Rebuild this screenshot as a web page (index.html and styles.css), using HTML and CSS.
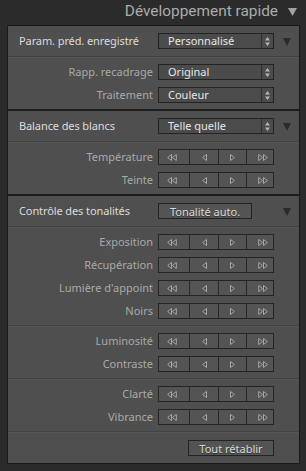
FILE: index.html
```html
<!DOCTYPE html>
<html lang="fr">
<head>
<meta charset="utf-8">
<link rel="stylesheet" href="styles.css">
</head>
<body>
<div class="app">
  <div class="title"><span>Développement rapide</span><svg class="tri" viewBox="0 0 9 8" width="9" height="8"><path d="M0 0 H9 L4.5 8 Z" fill="#a2a2a2"/></svg></div>
  <div class="panel">
    <section class="sec">
      <div class="head">
        <span class="htext">Param. préd. enregistré</span>
        <div class="select"><span>Personnalisé</span><i class="spin"><svg viewBox="0 0 5 9" width="5" height="9"><path d="M2.5 0 L5 3.5 H0 Z M2.5 9 L5 5.5 H0 Z" fill="#b4b4b4"/></svg></i></div>
        <svg class="disc" viewBox="0 0 8 8" width="8" height="8"><path d="M0 0 H8 L4 8 Z" fill="#2b2b2b"/></svg>
      </div>
      <div class="sep"></div>
      <div class="rows">
        <div class="row"><span class="lab">Rapp. recadrage</span><div class="select"><span>Original</span><i class="spin"><svg viewBox="0 0 5 9" width="5" height="9"><path d="M2.5 0 L5 3.5 H0 Z M2.5 9 L5 5.5 H0 Z" fill="#b4b4b4"/></svg></i></div></div>
        <div class="row"><span class="lab">Traitement</span><div class="select"><span>Couleur</span><i class="spin"><svg viewBox="0 0 5 9" width="5" height="9"><path d="M2.5 0 L5 3.5 H0 Z M2.5 9 L5 5.5 H0 Z" fill="#b4b4b4"/></svg></i></div></div>
      </div>
    </section>
    <section class="sec">
      <div class="head">
        <span class="htext">Balance des blancs</span>
        <div class="select"><span>Telle quelle</span><i class="spin"><svg viewBox="0 0 5 9" width="5" height="9"><path d="M2.5 0 L5 3.5 H0 Z M2.5 9 L5 5.5 H0 Z" fill="#b4b4b4"/></svg></i></div>
        <svg class="disc" viewBox="0 0 8 8" width="8" height="8"><path d="M0 0 H8 L4 8 Z" fill="#2b2b2b"/></svg>
      </div>
      <div class="sep"></div>
      <div class="rows">
        <div class="row"><span class="lab">Température</span><div class="steps"><b class="s1"><svg viewBox="0 0 10 7" width="10" height="7"><path d="M4.5 0.5 L0.7 3.5 L4.5 6.5 Z M9.3 0.5 L5.5 3.5 L9.3 6.5 Z" fill="#4c4c4c" stroke="#a8a8a8"/></svg></b><b class="s2"><svg viewBox="0 0 5 7" width="5" height="7"><path d="M4.5 0.5 L0.7 3.5 L4.5 6.5 Z" fill="#4c4c4c" stroke="#a8a8a8"/></svg></b><b class="s3"><svg viewBox="0 0 5 7" width="5" height="7"><path d="M0.5 0.5 L4.3 3.5 L0.5 6.5 Z" fill="#4c4c4c" stroke="#a8a8a8"/></svg></b><b class="s4"><svg viewBox="0 0 10 7" width="10" height="7"><path d="M0.7 0.5 L4.5 3.5 L0.7 6.5 Z M5.5 0.5 L9.3 3.5 L5.5 6.5 Z" fill="#4c4c4c" stroke="#a8a8a8"/></svg></b></div></div>
        <div class="row"><span class="lab">Teinte</span><div class="steps"><b class="s1"><svg viewBox="0 0 10 7" width="10" height="7"><path d="M4.5 0.5 L0.7 3.5 L4.5 6.5 Z M9.3 0.5 L5.5 3.5 L9.3 6.5 Z" fill="#4c4c4c" stroke="#a8a8a8"/></svg></b><b class="s2"><svg viewBox="0 0 5 7" width="5" height="7"><path d="M4.5 0.5 L0.7 3.5 L4.5 6.5 Z" fill="#4c4c4c" stroke="#a8a8a8"/></svg></b><b class="s3"><svg viewBox="0 0 5 7" width="5" height="7"><path d="M0.5 0.5 L4.3 3.5 L0.5 6.5 Z" fill="#4c4c4c" stroke="#a8a8a8"/></svg></b><b class="s4"><svg viewBox="0 0 10 7" width="10" height="7"><path d="M0.7 0.5 L4.5 3.5 L0.7 6.5 Z M5.5 0.5 L9.3 3.5 L5.5 6.5 Z" fill="#4c4c4c" stroke="#a8a8a8"/></svg></b></div></div>
      </div>
    </section>
    <section class="sec last">
      <div class="head">
        <span class="htext">Contrôle des tonalités</span>
        <div class="btn auto">Tonalité auto.</div>
        <svg class="disc far" viewBox="0 0 8 8" width="8" height="8"><path d="M0 0 H8 L4 8 Z" fill="#2b2b2b"/></svg>
      </div>
      <div class="sep"></div>
      <div class="rows">
        <div class="row"><span class="lab">Exposition</span><div class="steps"><b class="s1"><svg viewBox="0 0 10 7" width="10" height="7"><path d="M4.5 0.5 L0.7 3.5 L4.5 6.5 Z M9.3 0.5 L5.5 3.5 L9.3 6.5 Z" fill="#4c4c4c" stroke="#a8a8a8"/></svg></b><b class="s2"><svg viewBox="0 0 5 7" width="5" height="7"><path d="M4.5 0.5 L0.7 3.5 L4.5 6.5 Z" fill="#4c4c4c" stroke="#a8a8a8"/></svg></b><b class="s3"><svg viewBox="0 0 5 7" width="5" height="7"><path d="M0.5 0.5 L4.3 3.5 L0.5 6.5 Z" fill="#4c4c4c" stroke="#a8a8a8"/></svg></b><b class="s4"><svg viewBox="0 0 10 7" width="10" height="7"><path d="M0.7 0.5 L4.5 3.5 L0.7 6.5 Z M5.5 0.5 L9.3 3.5 L5.5 6.5 Z" fill="#4c4c4c" stroke="#a8a8a8"/></svg></b></div></div>
        <div class="row"><span class="lab">Récupération</span><div class="steps"><b class="s1"><svg viewBox="0 0 10 7" width="10" height="7"><path d="M4.5 0.5 L0.7 3.5 L4.5 6.5 Z M9.3 0.5 L5.5 3.5 L9.3 6.5 Z" fill="#4c4c4c" stroke="#a8a8a8"/></svg></b><b class="s2"><svg viewBox="0 0 5 7" width="5" height="7"><path d="M4.5 0.5 L0.7 3.5 L4.5 6.5 Z" fill="#4c4c4c" stroke="#a8a8a8"/></svg></b><b class="s3"><svg viewBox="0 0 5 7" width="5" height="7"><path d="M0.5 0.5 L4.3 3.5 L0.5 6.5 Z" fill="#4c4c4c" stroke="#a8a8a8"/></svg></b><b class="s4"><svg viewBox="0 0 10 7" width="10" height="7"><path d="M0.7 0.5 L4.5 3.5 L0.7 6.5 Z M5.5 0.5 L9.3 3.5 L5.5 6.5 Z" fill="#4c4c4c" stroke="#a8a8a8"/></svg></b></div></div>
        <div class="row"><span class="lab">Lumière d'appoint</span><div class="steps"><b class="s1"><svg viewBox="0 0 10 7" width="10" height="7"><path d="M4.5 0.5 L0.7 3.5 L4.5 6.5 Z M9.3 0.5 L5.5 3.5 L9.3 6.5 Z" fill="#4c4c4c" stroke="#a8a8a8"/></svg></b><b class="s2"><svg viewBox="0 0 5 7" width="5" height="7"><path d="M4.5 0.5 L0.7 3.5 L4.5 6.5 Z" fill="#4c4c4c" stroke="#a8a8a8"/></svg></b><b class="s3"><svg viewBox="0 0 5 7" width="5" height="7"><path d="M0.5 0.5 L4.3 3.5 L0.5 6.5 Z" fill="#4c4c4c" stroke="#a8a8a8"/></svg></b><b class="s4"><svg viewBox="0 0 10 7" width="10" height="7"><path d="M0.7 0.5 L4.5 3.5 L0.7 6.5 Z M5.5 0.5 L9.3 3.5 L5.5 6.5 Z" fill="#4c4c4c" stroke="#a8a8a8"/></svg></b></div></div>
        <div class="row"><span class="lab">Noirs</span><div class="steps"><b class="s1"><svg viewBox="0 0 10 7" width="10" height="7"><path d="M4.5 0.5 L0.7 3.5 L4.5 6.5 Z M9.3 0.5 L5.5 3.5 L9.3 6.5 Z" fill="#4c4c4c" stroke="#a8a8a8"/></svg></b><b class="s2"><svg viewBox="0 0 5 7" width="5" height="7"><path d="M4.5 0.5 L0.7 3.5 L4.5 6.5 Z" fill="#4c4c4c" stroke="#a8a8a8"/></svg></b><b class="s3"><svg viewBox="0 0 5 7" width="5" height="7"><path d="M0.5 0.5 L4.3 3.5 L0.5 6.5 Z" fill="#4c4c4c" stroke="#a8a8a8"/></svg></b><b class="s4"><svg viewBox="0 0 10 7" width="10" height="7"><path d="M0.7 0.5 L4.5 3.5 L0.7 6.5 Z M5.5 0.5 L9.3 3.5 L5.5 6.5 Z" fill="#4c4c4c" stroke="#a8a8a8"/></svg></b></div></div>
      </div>
      <div class="sep"></div>
      <div class="rows">
        <div class="row"><span class="lab">Luminosité</span><div class="steps"><b class="s1"><svg viewBox="0 0 10 7" width="10" height="7"><path d="M4.5 0.5 L0.7 3.5 L4.5 6.5 Z M9.3 0.5 L5.5 3.5 L9.3 6.5 Z" fill="#4c4c4c" stroke="#a8a8a8"/></svg></b><b class="s2"><svg viewBox="0 0 5 7" width="5" height="7"><path d="M4.5 0.5 L0.7 3.5 L4.5 6.5 Z" fill="#4c4c4c" stroke="#a8a8a8"/></svg></b><b class="s3"><svg viewBox="0 0 5 7" width="5" height="7"><path d="M0.5 0.5 L4.3 3.5 L0.5 6.5 Z" fill="#4c4c4c" stroke="#a8a8a8"/></svg></b><b class="s4"><svg viewBox="0 0 10 7" width="10" height="7"><path d="M0.7 0.5 L4.5 3.5 L0.7 6.5 Z M5.5 0.5 L9.3 3.5 L5.5 6.5 Z" fill="#4c4c4c" stroke="#a8a8a8"/></svg></b></div></div>
        <div class="row"><span class="lab">Contraste</span><div class="steps"><b class="s1"><svg viewBox="0 0 10 7" width="10" height="7"><path d="M4.5 0.5 L0.7 3.5 L4.5 6.5 Z M9.3 0.5 L5.5 3.5 L9.3 6.5 Z" fill="#4c4c4c" stroke="#a8a8a8"/></svg></b><b class="s2"><svg viewBox="0 0 5 7" width="5" height="7"><path d="M4.5 0.5 L0.7 3.5 L4.5 6.5 Z" fill="#4c4c4c" stroke="#a8a8a8"/></svg></b><b class="s3"><svg viewBox="0 0 5 7" width="5" height="7"><path d="M0.5 0.5 L4.3 3.5 L0.5 6.5 Z" fill="#4c4c4c" stroke="#a8a8a8"/></svg></b><b class="s4"><svg viewBox="0 0 10 7" width="10" height="7"><path d="M0.7 0.5 L4.5 3.5 L0.7 6.5 Z M5.5 0.5 L9.3 3.5 L5.5 6.5 Z" fill="#4c4c4c" stroke="#a8a8a8"/></svg></b></div></div>
      </div>
      <div class="sep"></div>
      <div class="rows">
        <div class="row"><span class="lab">Clarté</span><div class="steps"><b class="s1"><svg viewBox="0 0 10 7" width="10" height="7"><path d="M4.5 0.5 L0.7 3.5 L4.5 6.5 Z M9.3 0.5 L5.5 3.5 L9.3 6.5 Z" fill="#4c4c4c" stroke="#a8a8a8"/></svg></b><b class="s2"><svg viewBox="0 0 5 7" width="5" height="7"><path d="M4.5 0.5 L0.7 3.5 L4.5 6.5 Z" fill="#4c4c4c" stroke="#a8a8a8"/></svg></b><b class="s3"><svg viewBox="0 0 5 7" width="5" height="7"><path d="M0.5 0.5 L4.3 3.5 L0.5 6.5 Z" fill="#4c4c4c" stroke="#a8a8a8"/></svg></b><b class="s4"><svg viewBox="0 0 10 7" width="10" height="7"><path d="M0.7 0.5 L4.5 3.5 L0.7 6.5 Z M5.5 0.5 L9.3 3.5 L5.5 6.5 Z" fill="#4c4c4c" stroke="#a8a8a8"/></svg></b></div></div>
        <div class="row"><span class="lab">Vibrance</span><div class="steps"><b class="s1"><svg viewBox="0 0 10 7" width="10" height="7"><path d="M4.5 0.5 L0.7 3.5 L4.5 6.5 Z M9.3 0.5 L5.5 3.5 L9.3 6.5 Z" fill="#4c4c4c" stroke="#a8a8a8"/></svg></b><b class="s2"><svg viewBox="0 0 5 7" width="5" height="7"><path d="M4.5 0.5 L0.7 3.5 L4.5 6.5 Z" fill="#4c4c4c" stroke="#a8a8a8"/></svg></b><b class="s3"><svg viewBox="0 0 5 7" width="5" height="7"><path d="M0.5 0.5 L4.3 3.5 L0.5 6.5 Z" fill="#4c4c4c" stroke="#a8a8a8"/></svg></b><b class="s4"><svg viewBox="0 0 10 7" width="10" height="7"><path d="M0.7 0.5 L4.5 3.5 L0.7 6.5 Z M5.5 0.5 L9.3 3.5 L5.5 6.5 Z" fill="#4c4c4c" stroke="#a8a8a8"/></svg></b></div></div>
      </div>
      <div class="sep"></div>
      <div class="foot"><div class="btn reset">Tout rétablir</div></div>
    </section>
  </div>
</div>
</body>
</html>
```
FILE: styles.css
```css
* { box-sizing: border-box; }
html, body { margin: 0; padding: 0; }
body {
  background: #2b2b2b;
  width: 306px;
  height: 471px;
  overflow: hidden;
  font-family: "Noto Sans", "Open Sans", "Liberation Sans", sans-serif;
  font-size: 11px;
}
.app { padding: 0 6px 0 7px; }
.title {
  height: 25px;
  display: flex;
  justify-content: flex-end;
  align-items: center;
  gap: 10px;
  padding-right: 3px;
  padding-bottom: 2px;
  color: #ababab;
  font-family: Roboto, "Noto Sans", sans-serif;
  font-size: 15.4px;
}
.title span { line-height: 17px; }
.tri { margin-top: 1px; }
.panel {
  background: #4f4f4f;
  border: 1px solid #191919;
}
.sec { border-top: 2px solid #1d1d1d; }
.sec:first-child { border-top: 0; }
.head {
  display: flex;
  align-items: center;
  height: 16px;
  margin: 7px 0 7px;
  padding-left: 11px;
}
.htext {
  width: 139px;
  color: #dcdcdc;
  font-size: 11px;
  letter-spacing: -0.1px;
  line-height: 16px;
}
.disc { margin-left: 9px; margin-top: 1px; }
.disc.far { margin-left: 31px; }
.sep {
  height: 2px;
  background: #424242;
  border-bottom: 1px solid #565656;
}
.rows {
  display: flex;
  flex-direction: column;
  gap: 7px;
  padding: 6px 0 6px;
}
.row { display: flex; align-items: center; height: 16px; }
.lab {
  width: 150px;
  text-align: right;
  padding-right: 5px;
  color: #a9a9a9;
  font-size: 11px;
  line-height: 16px;
}
.select {
  width: 116px;
  height: 16px;
  border: 1px solid #232323;
  background: #4b4b4b;
  display: flex;
  align-items: center;
  color: #e6e6e6;
  font-size: 11px;
}
.select span { flex: 1; padding-left: 9px; line-height: 14px; }
.spin {
  width: 12px;
  height: 14px;
  border-left: 1px solid #2f2f2f;
  display: flex;
  align-items: center;
  justify-content: center;
}
.steps {
  width: 116px;
  height: 16px;
  border: 1px solid #242424;
  display: flex;
  background: #545454;
}
.steps b {
  display: flex;
  align-items: center;
  justify-content: center;
  border-left: 1px solid #282828;
}
.steps b:first-child { border-left: 0; }
.s1 { width: 30px; padding-right: 5px; }
.s2 { width: 29px; }
.s3 { width: 28px; }
.s4 { flex: 1; padding-left: 5px; }
.btn {
  height: 16px;
  border: 1px solid #232323;
  background: #545454;
  color: #dadada;
  display: flex;
  align-items: center;
  justify-content: center;
  font-size: 11px;
  text-shadow: 0 1px 0 #333;
}
.auto { width: 94px; }
.foot {
  display: flex;
  justify-content: flex-end;
  padding: 7px 25px 7px 0;
}
.reset { width: 86px; }
```
